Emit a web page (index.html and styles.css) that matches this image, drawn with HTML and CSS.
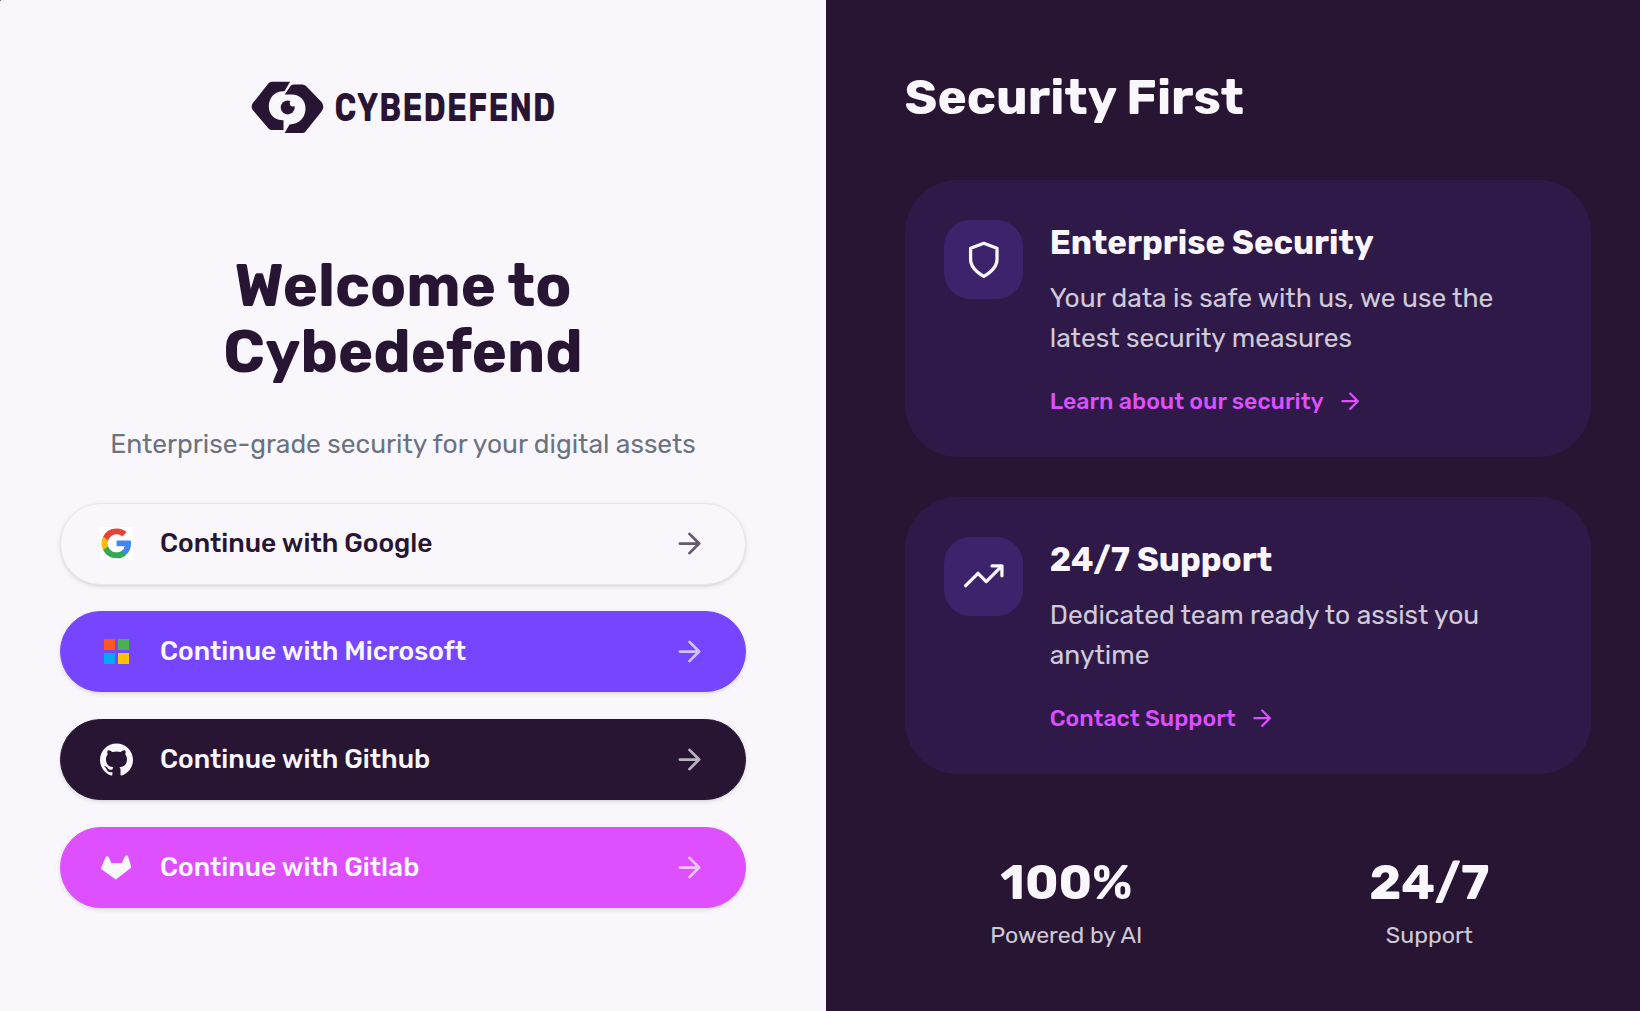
FILE: index.html
```html
<!DOCTYPE html>
<html lang="en">
<head>
<meta charset="utf-8">
<title>Cybedefend</title>
<link rel="stylesheet" href="styles.css">
</head>
<body>
<svg class="sprite" aria-hidden="true">
  <symbol id="arrow" viewBox="0 0 24 24"><path d="M5 12h14M12 5l7 7-7 7" fill="none" stroke="currentColor" stroke-width="2" stroke-linecap="round" stroke-linejoin="round"/></symbol>
</svg>
<main class="page">
  <section class="login">
    <svg class="logo" viewBox="0 0 303 54" role="img" aria-label="Cybedefend">
      <path d="M19.800.7H38L32.500 10.200C22.500 9.500 16.800 17 16.800 25.300C16.800 33.500 22 39.300 31.500 39.300V49H19.800Q18 49 16.500 47.500L.700 29Q-1.400 25.500.700 22.300L16.500 2.300Q18 .7 19.800.7Z"/>
      <path d="M41.500 3.500H50.500Q52.500 3.500 54 5L69.500 21Q73 25.500 69.500 30.500L53.500 50.500Q52.300 52 50.500 52H32.700L37.500 43.500C48 43 53.500 36 53.500 27.500C53.500 19 47.500 13.500 40 13.500H32.700L38.500 5Q39.500 3.500 41.500 3.500Z"/>
      <circle cx="35.700" cy="26.400" r="7"/>
      <circle class="glint" cx="41" cy="22.300" r="3.200"/>
      <text class="wordmark" x="82.500" y="40.300" textLength="222" lengthAdjust="spacingAndGlyphs">CYBEDEFEND</text>
    </svg>
    <h1 class="title">Welcome to<br>Cybedefend</h1>
    <p class="subtitle">Enterprise-grade security for your digital assets</p>
    <div class="providers">
      <button class="provider google">
        <svg class="brand" viewBox="0 0 33 33"><rect width="33" height="33" fill="#fff"/><g transform="translate(1.500 1.500) scale(1.230)"><path fill="#4285f4" d="M24 12.270c0-.85-.08-1.670-.22-2.450H12.250v4.640h6.590a5.630 5.630 0 0 1-2.440 3.700v3.010h3.950C22.660 19.040 24 15.940 24 12.270z"/><path fill="#34a853" d="M12.250 24.230c3.300 0 6.070-1.090 8.100-2.960l-3.950-3.070c-1.100.73-2.500 1.170-4.150 1.170-3.180 0-5.880-2.150-6.840-5.040H1.330v3.170a12.240 12.240 0 0 0 10.920 6.730z"/><path fill="#fbbc05" d="M5.410 14.330a7.300 7.300 0 0 1 0-4.660V6.500H1.330a12.100 12.100 0 0 0 0 11z"/><path fill="#ea4335" d="M12.250 4.640c1.800 0 3.400.62 4.670 1.830l3.500-3.500A11.770 11.770 0 0 0 12.250 0 12.240 12.240 0 0 0 1.330 6.500l4.080 3.170c.96-2.880 3.660-5.030 6.840-5.030z"/></g></svg>
        <span class="label">Continue with Google</span>
        <svg class="go"><use href="#arrow"/></svg>
      </button>
      <button class="provider microsoft">
        <svg class="brand" viewBox="0 0 33 33"><path fill="#ff5722" d="M4 4h11v11H4z"/><path fill="#4caf50" d="M18 4h11v11H18z"/><path fill="#03a9f4" d="M4 18h11v11H4z"/><path fill="#ffc107" d="M18 18h11v11H18z"/></svg>
        <span class="label">Continue with Microsoft</span>
        <svg class="go"><use href="#arrow"/></svg>
      </button>
      <button class="provider github">
        <svg class="brand" viewBox="0 0 24 24"><path fill="currentColor" d="M12 .297c-6.630 0-12 5.373-12 12 0 5.303 3.438 9.800 8.205 11.385.6.113.82-.258.82-.577 0-.285-.01-1.040-.015-2.040-3.338.724-4.042-1.610-4.042-1.610C4.422 18.070 3.633 17.700 3.633 17.700c-1.087-.744.084-.729.084-.729 1.205.084 1.838 1.236 1.838 1.236 1.070 1.835 2.809 1.305 3.495.998.108-.776.417-1.305.76-1.605-2.665-.3-5.466-1.332-5.466-5.930 0-1.310.465-2.380 1.235-3.220-.135-.303-.54-1.523.105-3.176 0 0 1.005-.322 3.300 1.230.96-.267 1.980-.399 3-.405 1.020.006 2.040.138 3 .405 2.280-1.552 3.285-1.230 3.285-1.230.645 1.653.24 2.873.12 3.176.765.84 1.230 1.910 1.230 3.220 0 4.610-2.805 5.625-5.475 5.920.42.36.81 1.096.81 2.220 0 1.606-.015 2.896-.015 3.286 0 .315.21.69.825.57C20.565 22.092 24 17.592 24 12.297c0-6.627-5.373-12-12-12"/></svg>
        <span class="label">Continue with Github</span>
        <svg class="go"><use href="#arrow"/></svg>
      </button>
      <button class="provider gitlab">
        <svg class="brand" viewBox="0 0 33 33"><path fill="currentColor" d="M5.700 6Q7 4.300 8.800 6L11.300 12H22L24.800 5.500Q26.800 3.500 28.200 5.800L31.300 16.200L30.500 17.300L15.800 28.500L1.700 18.500Q1 17.500 1.300 16.300Z"/></svg>
        <span class="label">Continue with Gitlab</span>
        <svg class="go"><use href="#arrow"/></svg>
      </button>
    </div>
  </section>
  <section class="about">
    <h2 class="heading">Security First</h2>
    <div class="cards">
      <article class="card">
        <div class="tile"><svg class="glyph" viewBox="0 0 24 24"><path d="M12 22s8-4 8-10V5l-8-3-8 3v7c0 6 8 10 8 10z"/></svg></div>
        <div class="body">
          <h3 class="name">Enterprise Security</h3>
          <p class="text">Your data is safe with us, we use the latest security measures</p>
          <a class="link">Learn about our security<svg class="next"><use href="#arrow"/></svg></a>
        </div>
      </article>
      <article class="card">
        <div class="tile"><svg class="glyph" viewBox="0 0 24 24"><path d="M23 6l-9.500 9.500-5-5L1 18M17 6h6v6"/></svg></div>
        <div class="body">
          <h3 class="name">24/7 Support</h3>
          <p class="text">Dedicated team ready to assist you anytime</p>
          <a class="link">Contact Support<svg class="next"><use href="#arrow"/></svg></a>
        </div>
      </article>
    </div>
    <div class="stats">
      <div class="stat"><div class="figure">100%</div><div class="caption">Powered by AI</div></div>
      <div class="stat"><div class="figure">24/7</div><div class="caption">Support</div></div>
    </div>
  </section>
</main>
</body>
</html>
```
FILE: styles.css
```css
:root {
  --night: #281534;
  --mist: #f9f7fc;
  --violet: #7645ff;
  --pink: #dd4fff;
}
* { box-sizing: border-box; margin: 0; padding: 0; }
html { font-size: 26.4px; }
body {
  font-family: Rubik, Roboto, sans-serif;
  line-height: 1.5;
  color: var(--night);
  background: var(--mist);
  overflow: hidden;
}
body::before {
  content: "";
  position: absolute;
  width: 1px;
  height: 1px;
  background: #77747c;
}
svg { display: block; flex: none; }
.sprite { position: absolute; width: 0; height: 0; }
.page { display: grid; grid-template-columns: 826px 1fr; height: 1011px; }

.login { padding: 81px 80px 0 60px; display: flex; flex-direction: column; }
.logo { width: 303px; height: 54px; align-self: center; fill: var(--night); overflow: visible; }
.glint { fill: var(--mist); }
.wordmark { font-family: Rubik, Roboto, sans-serif; font-weight: 700; font-size: 40px; letter-spacing: 1.5px; }
.title { margin-top: 118.2px; font-size: 59.4px; line-height: 66px; font-weight: 700; text-align: center; }
.subtitle { margin-top: 39.6px; text-align: center; color: #6b7280; }
.providers { margin-top: 39px; display: grid; gap: 26.6px; }
.provider {
  display: flex;
  align-items: center;
  gap: 27.2px;
  padding: 19.8px 38.8px;
  border: 1px solid transparent;
  border-radius: 40.6px;
  font: 500 26.4px/39.6px Rubik, Roboto, sans-serif;
  text-align: left;
  color: var(--mist);
  box-shadow: 0 1.65px 4.95px rgba(0, 0, 0, .1), 0 1.65px 3.3px -1.65px rgba(0, 0, 0, .1);
}
.brand { width: 33px; height: 33px; }
.label { flex: 1; }
.go { width: 33px; height: 33px; opacity: .7; }
.google { background: var(--mist); border-color: #e5e7eb; color: var(--night); }
.microsoft { background: var(--violet); border-color: var(--violet); }
.github { background: var(--night); border-color: var(--night); }
.gitlab { background: var(--pink); border-color: var(--pink); }

.about { background: var(--night); color: var(--mist); padding: 68.2px 49px 0 78.6px; }
.heading { font-size: 49.5px; line-height: 59.4px; font-weight: 700; }
.cards { margin-top: 52.6px; display: grid; gap: 39.6px; }
.card { display: flex; align-items: flex-start; gap: 26.4px; padding: 39.6px; border-radius: 52.8px; background: rgba(118, 69, 255, .1); }
.tile { display: flex; align-items: center; justify-content: center; flex: none; width: 79.2px; height: 79.2px; border-radius: 26.4px; background: rgba(118, 69, 255, .2); }
.glyph { width: 39.6px; height: 39.6px; fill: none; stroke: var(--mist); stroke-width: 2; stroke-linecap: round; stroke-linejoin: round; }
.body { flex: 1; }
.name { font-size: 33px; line-height: 46.2px; font-weight: 700; }
.text { margin-top: 13.2px; opacity: .8; }
.link { margin-top: 26.4px; display: flex; align-items: center; gap: 13.2px; font-size: 23.1px; line-height: 33px; font-weight: 500; color: var(--pink); }
.next { width: 26.4px; height: 26.4px; }
.stats { margin-top: 78.6px; display: grid; grid-template-columns: 1fr 1fr; gap: 39.6px; text-align: center; }
.figure { font-size: 49.5px; line-height: 59.4px; font-weight: 700; }
.caption { margin-top: 6.6px; font-size: 23.1px; line-height: 33px; opacity: .8; }
```
